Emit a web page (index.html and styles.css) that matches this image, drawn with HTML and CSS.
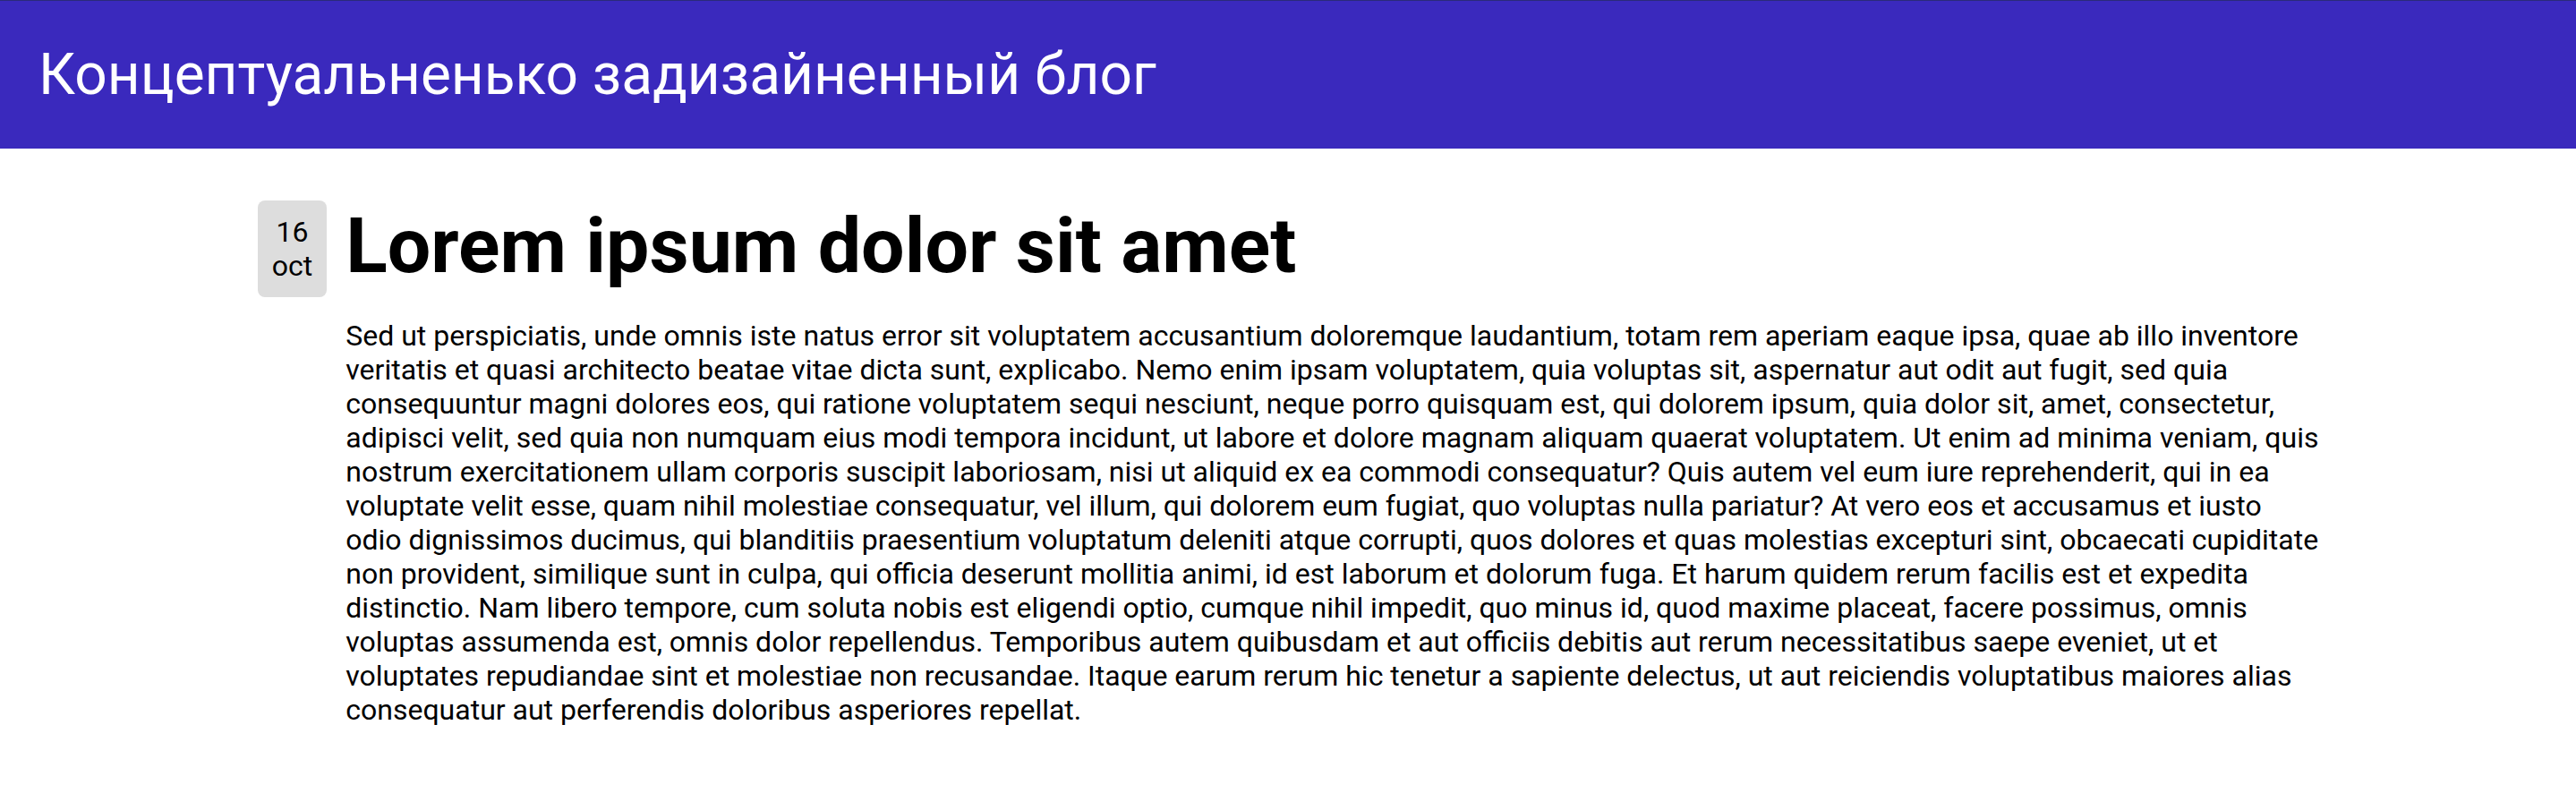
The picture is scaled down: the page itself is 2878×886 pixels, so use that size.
FILE: index.html
```html
<!DOCTYPE html>
<html lang="ru">
<head>
<meta charset="utf-8">
<title>Концептуальненько задизайненный блог</title>
<link rel="stylesheet" href="styles.css">
</head>
<body>
<header class="site-header">
  <div class="site-title">Концептуальненько задизайненный блог</div>
</header>
<main class="content">
  <article class="post">
    <div class="post-date">
      <span class="post-day">16</span>
      <span class="post-month">oct</span>
    </div>
    <div class="post-body">
      <h1 class="post-title">Lorem ipsum dolor sit amet</h1>
      <p class="post-text">Sed ut perspiciatis, unde omnis iste natus error sit voluptatem accusantium doloremque laudantium, totam rem aperiam eaque ipsa, quae ab illo inventore veritatis et quasi architecto beatae vitae dicta sunt, explicabo. Nemo enim ipsam voluptatem, quia voluptas sit, aspernatur aut odit aut fugit, sed quia consequuntur magni dolores eos, qui ratione voluptatem sequi nesciunt, neque porro quisquam est, qui dolorem ipsum, quia dolor sit, amet, consectetur, adipisci velit, sed quia non numquam eius modi tempora incidunt, ut labore et dolore magnam aliquam quaerat voluptatem. Ut enim ad minima veniam, quis nostrum exercitationem ullam corporis suscipit laboriosam, nisi ut aliquid ex ea commodi consequatur? Quis autem vel eum iure reprehenderit, qui in ea voluptate velit esse, quam nihil molestiae consequatur, vel illum, qui dolorem eum fugiat, quo voluptas nulla pariatur? At vero eos et accusamus et iusto odio dignissimos ducimus, qui blanditiis praesentium voluptatum deleniti atque corrupti, quos dolores et quas molestias excepturi sint, obcaecati cupiditate non provident, similique sunt in culpa, qui officia deserunt mollitia animi, id est laborum et dolorum fuga. Et harum quidem rerum facilis est et expedita distinctio. Nam libero tempore, cum soluta nobis est eligendi optio, cumque nihil impedit, quo minus id, quod maxime placeat, facere possimus, omnis voluptas assumenda est, omnis dolor repellendus. Temporibus autem quibusdam et aut officiis debitis aut rerum necessitatibus saepe eveniet, ut et voluptates repudiandae sint et molestiae non recusandae. Itaque earum rerum hic tenetur a sapiente delectus, ut aut reiciendis voluptatibus maiores alias consequatur aut perferendis doloribus asperiores repellat.</p>
    </div>
  </article>
</main>
</body>
</html>
```

FILE: styles.css
```css
html, body {
  margin: 0;
  padding: 0;
  background: #ffffff;
}

body {
  font-family: Roboto, "Liberation Sans", sans-serif;
  font-size: 32px;
  color: #000000;
}

.site-header {
  background: #3a29bd;
  border-top: 1px solid #2b2a7a;
  height: 165px;
  display: flex;
  align-items: center;
  padding: 0 43px;
}

.site-title {
  font-size: 64px;
  font-weight: 400;
  color: #ffffff;
  line-height: normal;
}

.content {
  width: 80%;
  margin: 0 auto;
  padding-top: 58px;
}

.post {
  display: flex;
  align-items: flex-start;
  gap: 21px;
}

.post-date {
  flex: none;
  display: flex;
  flex-direction: column;
  align-items: center;
  padding: 16px;
  background: #dddddd;
  border-radius: 8px;
  font-size: 32px;
  line-height: normal;
}

.post-body {
  flex: 1;
  min-width: 0;
  margin-right: -5px;
}

.post-title {
  margin: 0;
  font-size: 86px;
  font-weight: 700;
  line-height: normal;
}

.post-text {
  margin: 31px 0 0;
  font-size: 32px;
  line-height: normal;
}
```
